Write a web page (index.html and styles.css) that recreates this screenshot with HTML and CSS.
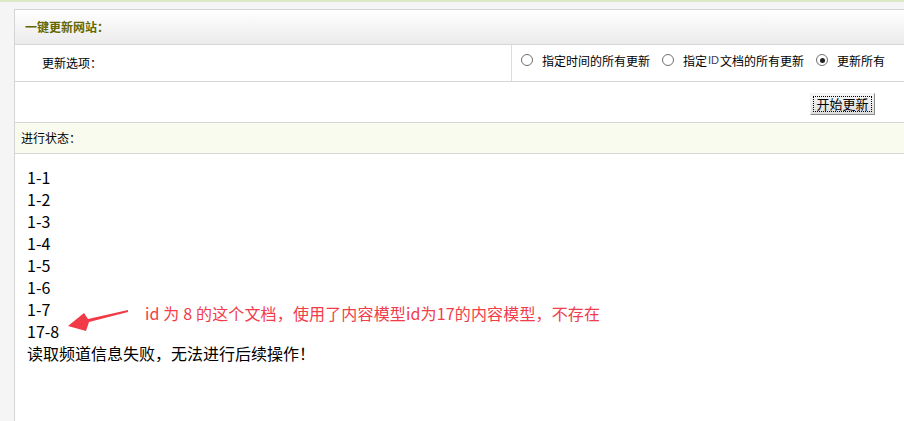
FILE: index.html
```html
<!DOCTYPE html>
<html lang="zh-CN">
<head>
    <meta charset="UTF-8">
    <title>一键更新网站</title>
    <link rel="stylesheet" href="styles.css">
</head>
<body>
    <div class="page">
        <div class="panel">
            <div class="panel-head">一键更新网站：</div>
            <div class="row options">
                <div class="label">更新选项：</div>
                <div class="choices">
                    <label class="radio"><span class="dot"></span>指定时间的所有更新</label>
                    <label class="radio"><span class="dot"></span>指定<span class="id">ID</span>文档的所有更新</label>
                    <label class="radio on"><span class="dot"></span>更新所有</label>
                </div>
            </div>
            <div class="row actions">
                <button class="btn"><span>开始更新</span></button>
            </div>
            <div class="row status-head">进行状态：</div>
            <div class="log">
                <div>1-1</div>
                <div>1-2</div>
                <div>1-3</div>
                <div>1-4</div>
                <div>1-5</div>
                <div>1-6</div>
                <div>1-7</div>
                <div>17-8</div>
                <div>读取频道信息失败，无法进行后续操作！</div>

                <!-- 标注 -->
                <svg class="arrow" width="90" height="40" viewBox="0 0 90 40">
                    <polygon points="78,10 38,19 34,13 18,26 36,31 39,22 78,12" fill="#f23a46"/>
                </svg>
                <span class="note">id 为 8 的这个文档，使用了内容模型id为17的内容模型，不存在</span>
            </div>
        </div>
    </div>
</body>
</html>
```

FILE: styles.css
```css
*{
    margin:0;
    padding:0;
    box-sizing:border-box;
}
html,body{
    height:100%;
}
body{
    background:#f5f5f5;
    border-top:2px solid #dce9c6;
    overflow:hidden;
    font-family:"Noto Sans CJK SC","Liberation Sans",sans-serif;
    color:#000;
}
.page{
    padding:7px 0 0 14px;
}
.panel{
    width:890px;
    background:#fff;
    border-left:1px solid #d4d4d4;
    border-top:1px solid #d4d4d4;
}
.panel-head{
    height:35px;
    line-height:34px;
    padding-left:10px;
    font-size:12px;
    font-weight:bold;
    color:#666600;
    background:linear-gradient(#ffffff,#ebebeb);
    border-bottom:1px solid #d6d6d6;
}
.row{
    border-bottom:1px solid #d6d6d6;
    font-size:12px;
}
.options{
    display:flex;
    height:37px;
}
.options .label{
    width:497px;
    padding-left:27px;
    line-height:36px;
    border-right:1px solid #dcdcdc;
}
.choices{
    display:flex;
    align-items:center;
    padding:0 0 6px 9px;
    white-space:nowrap;
}
.radio{
    display:flex;
    align-items:center;
    margin-right:12px;
}
.radio .dot{
    width:12px;
    height:12px;
    border-radius:50%;
    border:1px solid #6f6f6f;
    background:#fff;
    margin-right:9px;
    position:relative;
}
.radio.on .dot::after{
    content:"";
    position:absolute;
    left:2.5px;
    top:2.5px;
    width:5px;
    height:5px;
    border-radius:50%;
    background:#222;
}
.radio .id{
    font-family:"Liberation Sans",sans-serif;
    font-size:11px;
    padding:0 1px;
    color:#3c3c66;
}
.actions{
    height:41px;
    padding:11px 0 0 795px;
}
.btn{
    width:65px;
    height:22px;
    padding:2px;
    border:1px solid;
    border-color:#f2f2f2 #8a8a8a #8a8a8a #f2f2f2;
    background:linear-gradient(#f6f6f6,#dedede);
    font-family:"Noto Sans CJK SC",sans-serif;
    font-size:13px;
    color:#000;
}
.btn span{
    display:block;
    height:16px;
    line-height:14px;
    border:1px dotted #000;
}
.status-head{
    height:31px;
    line-height:30px;
    padding-left:6px;
    background:#f9fbef;
}
.log{
    position:relative;
    height:267px;
    padding:12px 0 0 12px;
    font-size:16px;
    line-height:22px;
}
.arrow{
    position:absolute;
    left:35px;
    top:146px;
}
.note{
    position:absolute;
    left:130px;
    top:148px;
    color:#f23c4a;
    letter-spacing:0.15px;
    white-space:nowrap;
}
```
